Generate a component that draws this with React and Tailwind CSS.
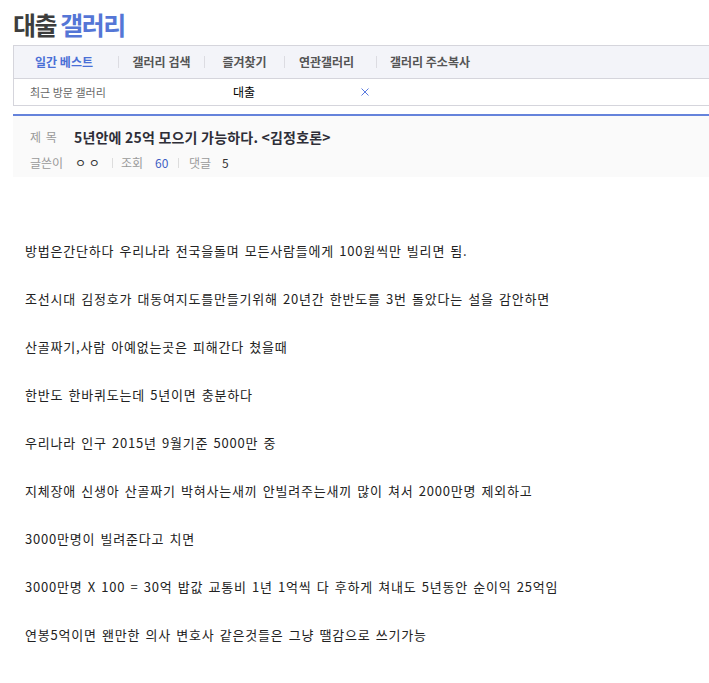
import React from "react";

const lines = [
  "방법은간단하다 우리나라 전국을돌며 모든사람들에게 100원씩만 빌리면 됨.",
  "조선시대 김정호가 대동여지도를만들기위해 20년간 한반도를 3번 돌았다는 설을 감안하면",
  "산골짜기,사람 아예없는곳은 피해간다 쳤을때",
  "한반도 한바퀴도는데 5년이면 충분하다",
  "우리나라 인구 2015년 9월기준 5000만 중",
  "지체장애 신생아 산골짜기 박혀사는새끼 안빌려주는새끼 많이 쳐서 2000만명 제외하고",
  "3000만명이 빌려준다고 치면",
  "3000만명 X 100 = 30억 밥값 교통비 1년 1억씩 다 후하게 쳐내도 5년동안 순이익 25억임",
  "연봉5억이면 왠만한 의사 변호사 같은것들은 그냥 땔감으로 쓰기가능",
];

function Sep() {
  return <div className="w-px h-[12px] bg-[#dcdce2] shrink-0" />;
}

export default function App() {
  return (
    <div
      className="w-[709px] min-h-[683px] bg-white overflow-hidden"
      style={{ fontFamily: '"Noto Sans CJK KR", "Noto Sans", sans-serif' }}
    >
      <h1 className="pt-[9px] pl-[13px] h-[40px] text-[25px] leading-[30px] font-bold tracking-[-1.5px]">
        <span className="text-[#3d3d3d]">대출</span>{" "}
        <span className="text-[#5576d6]">갤러리</span>
      </h1>

      <div className="mt-[5px] ml-[13px] border-l border-t border-b border-[#d5d5dc]">
        <div className="h-[33px] bg-[#f3f4f9] border-b border-[#d5d5dc] flex items-center text-[12px] font-bold text-[#555]">
          <div className="w-[104px] flex justify-center text-[#4a6fd6] pr-[4px]">일간 베스트</div>
          <Sep />
          <div className="w-[85px] flex justify-center">갤러리 검색</div>
          <Sep />
          <div className="w-[79px] flex justify-center">즐겨찾기</div>
          <Sep />
          <div className="w-[91px] flex justify-center pr-[8px]">연관갤러리</div>
          <Sep />
          <div className="w-[106px] flex justify-center">갤러리 주소복사</div>
        </div>
        <div className="h-[26px] flex items-center text-[11px]">
          <div className="w-[219px] pl-[16px] text-[#666]">최근 방문 갤러리</div>
          <div className="w-[128px] text-[12px] text-black">대출</div>
          <div className="text-[#5a7ae0] text-[12px] leading-none">
            <svg width="8" height="8" viewBox="0 0 8 8">
              <path d="M0.5 0.5 L7.5 7.5 M7.5 0.5 L0.5 7.5" stroke="#5a7ae0" strokeWidth="1" fill="none" />
            </svg>
          </div>
        </div>
      </div>

      <div className="mt-[8px] ml-[13px] border-t-2 border-[#6583db] bg-[#fafafa] h-[63px] pl-[17px]">
        <div className="flex items-center h-[38px] pt-[4px]">
          <div className="w-[44px] text-[12px] text-[#999] tracking-[1px]">제 목</div>
          <div className="text-[14px] font-bold text-[#2e2e38] tracking-[0.2px]">
            5년안에 25억 모으기 가능하다. &lt;김정호론&gt;
          </div>
        </div>
        <div className="flex items-center h-[18px] text-[12px]">
          <div className="w-[45px] text-[#999]">글쓴이</div>
          <div className="text-[#333] w-[37px]">ㅇ ㅇ</div>
          <div className="w-px h-[10px] bg-[#ddd] mr-[8px]" />
          <div className="text-[#999] w-[34px]">조회</div>
          <div className="text-[#3f5fc4] w-[23px]">60</div>
          <div className="w-px h-[10px] bg-[#ddd] mr-[10px]" />
          <div className="text-[#999] w-[33px]">댓글</div>
          <div className="text-[#333]">5</div>
        </div>
      </div>

      <div className="pt-[50px] pl-[25px] text-[13px] text-[#222] tracking-[0.8px] [word-spacing:1.5px]">
        {lines.map((l, i) => (
          <p key={i} className="h-[48px] leading-[48px] whitespace-nowrap">
            {l}
          </p>
        ))}
      </div>
    </div>
  );
}
